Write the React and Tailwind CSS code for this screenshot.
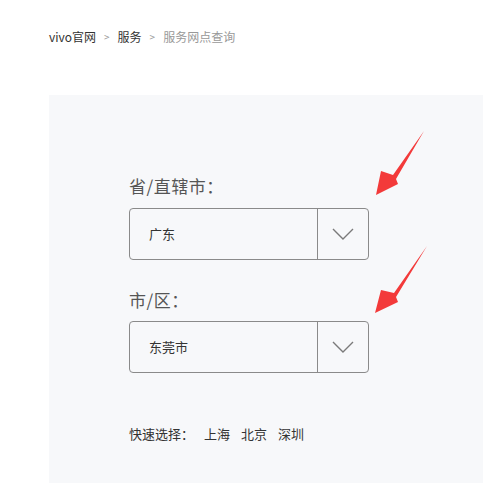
const Chevron = () => (
  <svg width="22" height="12" viewBox="0 0 22 12" fill="none">
    <polyline points="1,1 11,11 21,1" stroke="#7a7a7a" strokeWidth="1.4" />
  </svg>
)

const SelectBox = ({ value }) => (
  <div className="flex h-[52px] w-[240px] rounded-[4px] border border-[#8a8a8a]">
    <div className="flex flex-1 items-center pl-[19px] text-[13px] text-[#333]">{value}</div>
    <div className="flex w-[51px] items-center justify-center border-l border-[#8a8a8a]">
      <Chevron />
    </div>
  </div>
)

export default function App() {
  return (
    <div
      className="relative h-[483px] w-[483px] overflow-hidden bg-white"
      style={{ fontFamily: '"Noto Sans CJK SC", "Noto Sans", sans-serif' }}
    >
      {/* breadcrumb */}
      <div className="flex h-[95px] items-start pl-[49px] pt-[29px] text-[12px] leading-[16px]">
        <span className="text-[#333]">vivo官网</span>
        <span className="mx-[8px] text-[10px] text-[#999]">&gt;</span>
        <span className="text-[#333]">服务</span>
        <span className="mx-[8px] text-[10px] text-[#999]">&gt;</span>
        <span className="text-[#999]">服务网点查询</span>
      </div>

      {/* panel */}
      <div className="ml-[49px] h-[388px] bg-[#f7f8fa] pl-[80px] pt-[79px]">
        <div className="text-[17px] leading-[24px] tracking-[0.5px] text-[#555]">省/直辖市：</div>
        <div className="mt-[10px]">
          <SelectBox value="广东" />
        </div>
        <div className="mt-[28px] text-[17px] leading-[24px] tracking-[0.5px] text-[#555]">市/区：</div>
        <div className="mt-[9px]">
          <SelectBox value="东莞市" />
        </div>
        <div className="mt-[51px] flex text-[13px] leading-[20px] text-[#333]">
          <span>快速选择：</span>
          <span className="ml-[10px]">上海</span>
          <span className="ml-[11px]">北京</span>
          <span className="ml-[11px]">深圳</span>
        </div>
      </div>

      {/* annotation arrows */}
      <svg className="absolute left-0 top-0" width="483" height="483" viewBox="0 0 483 483">
        <polygon points="424,131 393,175 381,171 376,195 398,184 396,179" fill="#f33a3a" />
        <polygon points="427,246 394,293 381,290 375,313 398,302 396,297" fill="#f33a3a" />
      </svg>
    </div>
  )
}
